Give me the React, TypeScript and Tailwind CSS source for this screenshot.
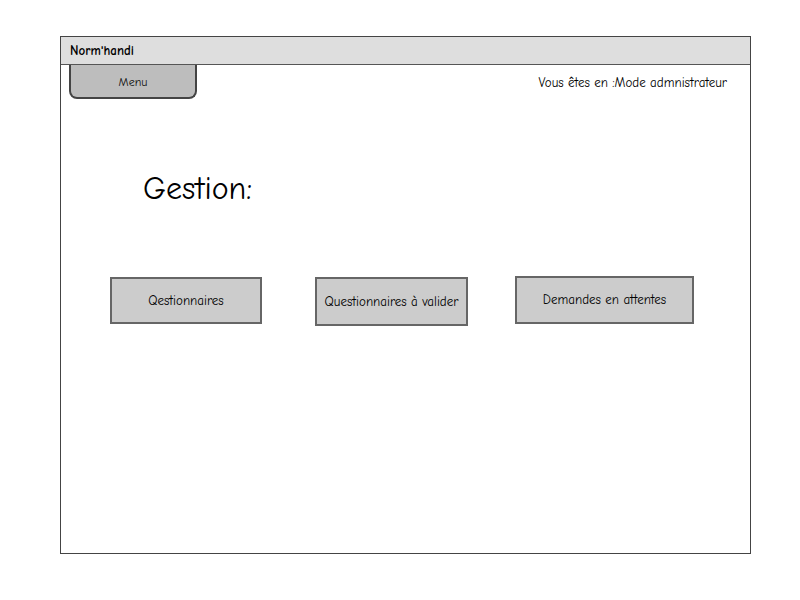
const font = "font-['Comic_Sans_MS','Comic_Neue','Liberation_Sans',sans-serif]";

function SketchButton({ label, className }: { label: string; className: string }) {
  return (
    <div
      className={`flex items-center justify-center border-2 border-[#666] bg-[#cccccc] text-[13px] text-black ${className}`}
    >
      {label}
    </div>
  );
}

export default function App() {
  return (
    <div className={`h-[600px] w-[800px] bg-white pt-[36px] pl-[60px] ${font}`}>
      <div className="flex h-[518px] w-[691px] flex-col border border-[#444] bg-white">
        {/* title bar */}
        <div className="flex h-[28px] shrink-0 items-center border-b border-[#555] bg-[#dedede] pl-[9px] text-[13px] font-bold text-black">
          Norm'handi
        </div>

        <div className="flex items-start justify-between">
          <div className="ml-[8px] flex h-[34px] w-[128px] items-center justify-center rounded-b-[8px] border-x-2 border-b-2 border-[#444] bg-[#bdbdbd] pt-[1px] text-[12px] text-[#111]">
            Menu
          </div>
          <div className="mt-[8px] mr-[23px] text-[13px] text-black">Vous êtes en :Mode admnistrateur</div>
        </div>

        <h1 className="mt-[72px] ml-[82px] text-[32px] leading-[36px] text-black">Gestion:</h1>

        <div className="mt-[70px] ml-[49px] flex items-start">
          <SketchButton label="Qestionnaires" className="h-[47px] w-[152px]" />
          <SketchButton label="Questionnaires à valider" className="ml-[53px] h-[49px] w-[153px]" />
          <SketchButton label="Demandes en attentes" className="ml-[47px] -mt-[1px] h-[48px] w-[179px]" />
        </div>
      </div>
    </div>
  );
}
